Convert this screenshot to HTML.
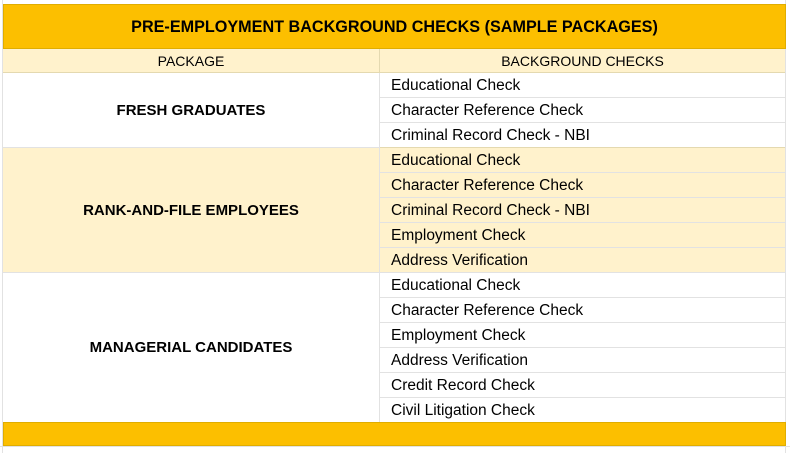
<!DOCTYPE html>
<html><head><style>
body{margin:0;width:790px;height:453px;background:#fff;font-family:"Liberation Sans",Arial,sans-serif;position:relative;overflow:hidden;color:#000}
.a{position:absolute;box-sizing:border-box}
.t{left:3px;top:4px;width:783px;height:45px;background:#fcbf00;border:1px solid #e0ad00;font-weight:bold;font-size:16.2px;display:flex;align-items:center;justify-content:center;padding-top:1px}
.h{top:49px;height:24px;background:#fff2cc;border-bottom:1px solid #e4d9b0;font-size:14px;display:flex;align-items:center;justify-content:center}
.r{left:380px;width:405px;height:25px;border-bottom:1px solid #e2e2e2;font-size:15.5px;padding-left:11px;line-height:25px}
.p{left:3px;width:377px;border-right:1px solid #e2e2e2;border-bottom:1px solid #e2e2e2;font-weight:bold;font-size:15px;display:flex;align-items:center;justify-content:center}
.y{background:#fff2cc}
</style></head><body>
<div class="a" style="left:2px;top:0;width:1px;height:453px;background:#e2e2e2"></div>
<div class="a" style="left:785px;top:0;width:1px;height:453px;background:#e2e2e2"></div>
<div class="a t">PRE-EMPLOYMENT BACKGROUND CHECKS (SAMPLE PACKAGES)</div>
<div class="a h" style="left:3px;width:377px;border-right:1px solid #e4d9b0">PACKAGE</div>
<div class="a h" style="left:380px;width:405px">BACKGROUND CHECKS</div>

<div class="a p" style="top:73px;height:75px">FRESH GRADUATES</div>
<div class="a r" style="top:73px">Educational Check</div>
<div class="a r" style="top:98px">Character Reference Check</div>
<div class="a r" style="top:123px;border-bottom-color:#e4d9b0">Criminal Record Check - NBI</div>

<div class="a p y" style="top:148px;height:125px">RANK-AND-FILE EMPLOYEES</div>
<div class="a r y" style="top:148px">Educational Check</div>
<div class="a r y" style="top:173px">Character Reference Check</div>
<div class="a r y" style="top:198px">Criminal Record Check - NBI</div>
<div class="a r y" style="top:223px">Employment Check</div>
<div class="a r y" style="top:248px">Address Verification</div>

<div class="a p" style="top:273px;height:150px">MANAGERIAL CANDIDATES</div>
<div class="a r" style="top:273px">Educational Check</div>
<div class="a r" style="top:298px">Character Reference Check</div>
<div class="a r" style="top:323px">Employment Check</div>
<div class="a r" style="top:348px">Address Verification</div>
<div class="a r" style="top:373px">Credit Record Check</div>
<div class="a r" style="top:398px">Civil Litigation Check</div>

<div class="a" style="left:3px;top:422px;width:783px;height:24px;background:#fcbf00;border:1px solid #e0ad00"></div>
<div class="a" style="left:0;top:446px;width:790px;height:1px;background:#e2e2e2"></div>
</body></html>
